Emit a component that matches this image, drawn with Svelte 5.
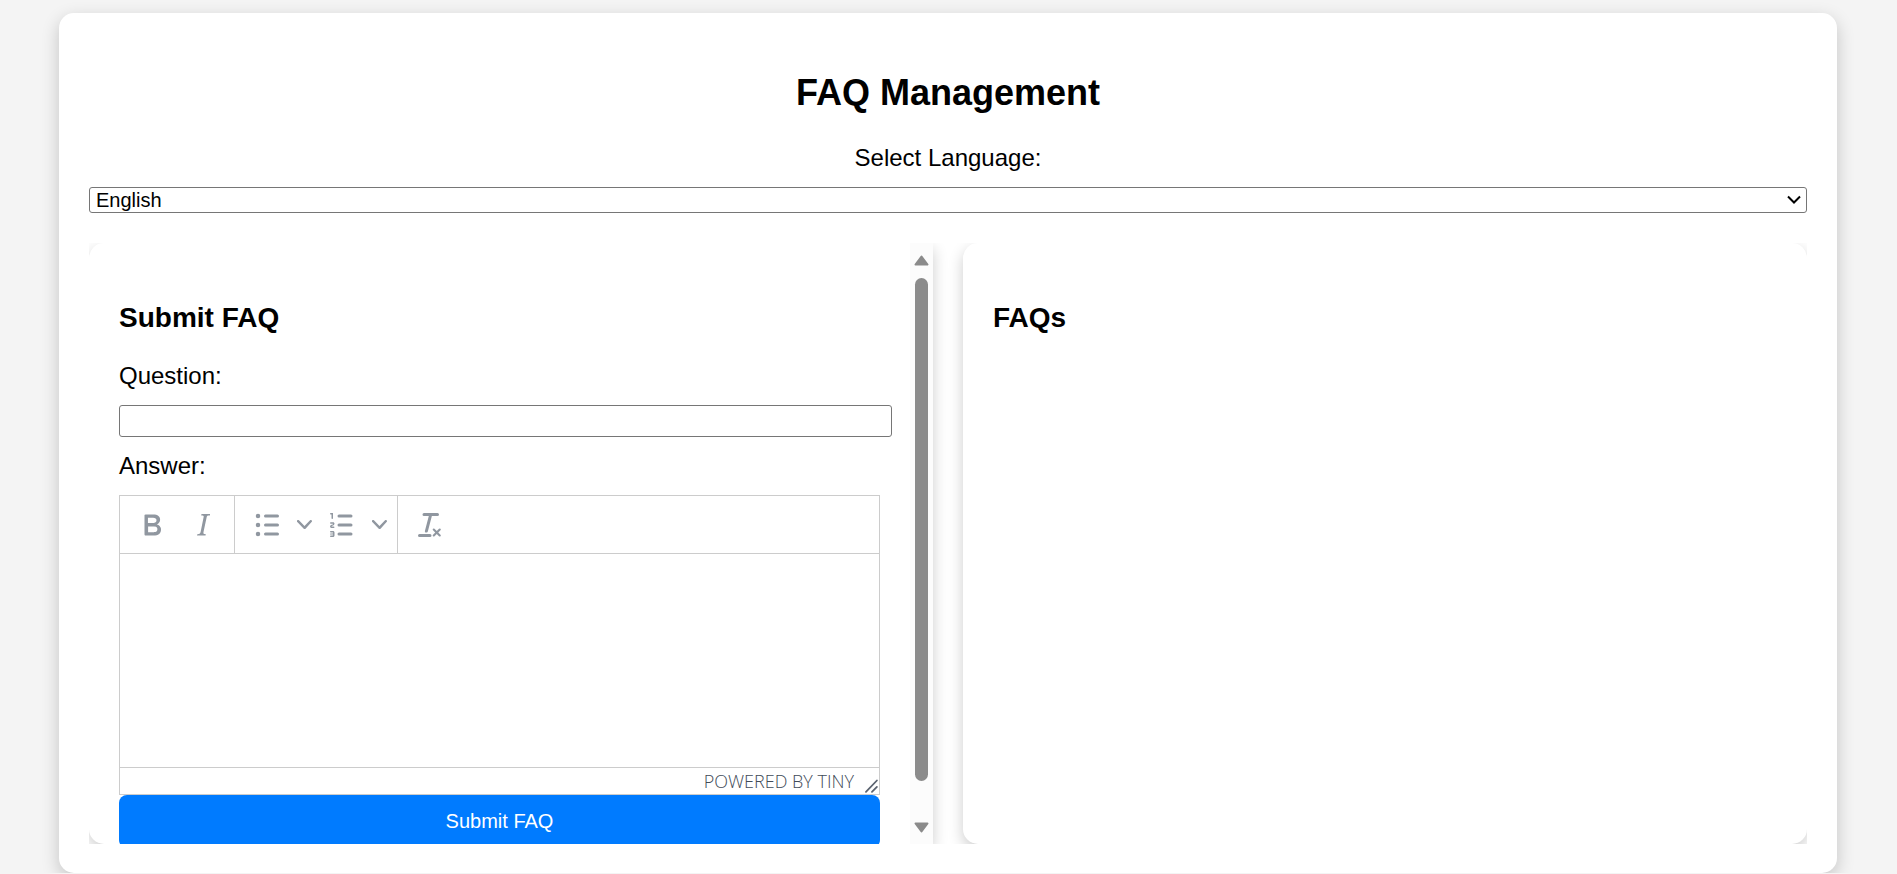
<script>
  let language = $state('en');
  let question = $state('');
  let answer = $state('');

  const languages = [
    { code: 'en', name: 'English' },
    { code: 'hi', name: 'Hindi' },
    { code: 'bn', name: 'Bengali' }
  ];

  const icons = {
    bold: 'M7.8 19c-.3 0-.5 0-.6-.2l-.2-.5V5.7c0-.2 0-.4.2-.5l.6-.2h5c1.5 0 2.7.3 3.5 1 .7.6 1.1 1.4 1.1 2.5a3 3 0 0 1-.6 1.9c-.4.6-1 1-1.6 1.2.4.1.9.3 1.3.6s.8.7 1 1.2c.4.4.5 1 .5 1.6 0 1.3-.4 2.3-1.3 3-.8.7-2.1 1-3.8 1H7.8Zm5-8.3c.6 0 1.2-.1 1.6-.5.4-.3.6-.7.6-1.3 0-1.1-.8-1.7-2.3-1.7H9.3v3.5h3.4Zm.5 6c.7 0 1.3-.1 1.7-.4.4-.4.6-.9.6-1.5s-.2-1-.7-1.4c-.4-.3-1-.4-2-.4H9.4v3.8h4Z',
    italic: 'm16.7 4.7-.1.9h-.3c-.6 0-1 0-1.4.3-.3.3-.4.6-.5 1.1l-2.1 9.8v.6c0 .5.4.8 1.4.8h.2l-.2.8H8l.2-.8h.2c1.1 0 1.8-.5 2-1.5l2-9.8.1-.5c0-.6-.4-.8-1.4-.8h-.3l.2-.9h5.8Z',
    bullets: 'M11 5h8a1 1 0 0 1 0 2h-8a1 1 0 0 1 0-2Zm0 6h8a1 1 0 0 1 0 2h-8a1 1 0 0 1 0-2Zm0 6h8a1 1 0 0 1 0 2h-8a1 1 0 0 1 0-2ZM4.5 6a1.5 1.5 0 1 1 3 0 1.5 1.5 0 0 1-3 0Zm0 6a1.5 1.5 0 1 1 3 0 1.5 1.5 0 0 1-3 0Zm0 6a1.5 1.5 0 1 1 3 0 1.5 1.5 0 0 1-3 0Z',
    numbers: 'M10 17h8a1 1 0 0 1 0 2h-8a1 1 0 0 1 0-2Zm0-6h8a1 1 0 0 1 0 2h-8a1 1 0 0 1 0-2Zm0-6h8a1 1 0 0 1 0 2h-8a1 1 0 1 1 0-2ZM6 4v3.5c0 .3-.2.5-.5.5a.5.5 0 0 1-.5-.5V5h-.5a.5.5 0 0 1 0-1H6Zm-1 8.8.2.2h1.3c.3 0 .5.2.5.5s-.2.5-.5.5H4.9a1 1 0 0 1-.9-1V13c0-.4.3-.8.6-1l1.2-.4.2-.3a.2.2 0 0 0-.2-.2H4.5a.5.5 0 0 1-.5-.5c0-.3.2-.5.5-.5h1.6c.5 0 .9.4.9 1v.1c0 .4-.3.8-.6 1l-1.2.4-.2.3ZM7 17v2c0 .6-.4 1-1 1H4.5a.5.5 0 0 1 0-1h1.2c.2 0 .3-.1.3-.3 0-.2-.1-.3-.3-.3H4.4a.4.4 0 1 1 0-.8h1.3c.2 0 .3-.1.3-.3 0-.2-.1-.3-.3-.3H4.5a.5.5 0 1 1 0-1H6c.6 0 1 .4 1 1Z',
    clear: 'M13.2 6a1 1 0 0 1 0 .2l-2.6 10a1 1 0 0 1-1 .8h-.2a.8.8 0 0 1-.8-1l2.6-10H8a1 1 0 1 1 0-2h9a1 1 0 0 1 0 2h-3.8ZM5 18h7a1 1 0 0 1 0 2H5a1 1 0 0 1 0-2Zm13 1.5L16.5 18 15 19.5a.7.7 0 0 1-1-1l1.5-1.5-1.5-1.5a.7.7 0 0 1 1-1l1.5 1.5 1.5-1.5a.7.7 0 0 1 1 1L17.5 17l1.5 1.5a.7.7 0 0 1-1 1Z',
    chevron: 'M8.7 2.2c.3-.3.8-.3 1 0 .4.4.4.9 0 1.2L5.7 7.8c-.3.3-.9.3-1.2 0L.2 3.4a.8.8 0 0 1 0-1.2c.3-.3.8-.3 1.1 0L5 6l3.7-3.8Z'
  };

  const groups = [
    [
      { name: 'Bold', icon: icons.bold },
      { name: 'Italic', icon: icons.italic }
    ],
    [
      { name: 'Bullet list', icon: icons.bullets, menu: true },
      { name: 'Numbered list', icon: icons.numbers, menu: true }
    ],
    [{ name: 'Clear formatting', icon: icons.clear }]
  ];
</script>

<main class="card">
  <h2>FAQ Management</h2>
  <label class="centered" for="language">Select Language:</label>
  <div class="select">
    <select id="language" bind:value={language}>
      {#each languages as item}
        <option value={item.code}>{item.name}</option>
      {/each}
    </select>
    <svg width="14" height="10" viewBox="0 0 14 10" aria-hidden="true">
      <path d="M1 1.5l6 6 6-6" fill="none" stroke="#000" stroke-width="2" />
    </svg>
  </div>

  <div class="columns">
    <section class="panel scrolling">
      <form class="content" onsubmit={(event) => event.preventDefault()}>
        <h3>Submit FAQ</h3>
        <label for="question">Question:</label>
        <input id="question" type="text" bind:value={question} />
        <label for="answer">Answer:</label>
        <div class="editor">
          <div class="toolbar" role="toolbar" aria-label="Formatting">
            {#each groups as group}
              <div class="group">
                {#each group as tool}
                  <button type="button" class="tool" class:split={tool.menu} aria-label={tool.name}>
                    <svg width="36" height="36" viewBox="0 0 24 24" aria-hidden="true">
                      <path d={tool.icon} fill-rule="evenodd" />
                    </svg>
                    {#if tool.menu}
                      <svg width="15" height="15" viewBox="0 0 10 10" aria-hidden="true">
                        <path d={icons.chevron} />
                      </svg>
                    {/if}
                  </button>
                {/each}
              </div>
            {/each}
          </div>
          <textarea id="answer" bind:value={answer}></textarea>
          <div class="status">
            <span>POWERED BY TINY</span>
            <svg width="15" height="15" viewBox="0 0 10 10" aria-hidden="true">
              <path d="M8.600 1L1.300 8.600M8.600 5.300L5.300 8.600" fill="none" stroke="#5b6370" stroke-width="1.200" stroke-linecap="round" />
            </svg>
          </div>
        </div>
        <button type="submit" class="submit">Submit FAQ</button>
      </form>
      <div class="scrollbar" aria-hidden="true">
        <svg width="15" height="11" viewBox="0 0 15 11">
          <path d="M7.500 1.500L13.500 9.500H1.500Z" fill="#8b8b8b" stroke="#8b8b8b" stroke-width="2" stroke-linejoin="round" />
        </svg>
        <div class="thumb"></div>
        <svg width="15" height="11" viewBox="0 0 15 11">
          <path d="M7.500 9.500L13.500 1.500H1.500Z" fill="#8b8b8b" stroke="#8b8b8b" stroke-width="2" stroke-linejoin="round" />
        </svg>
      </div>
    </section>
    <section class="panel">
      <div class="content">
        <h3>FAQs</h3>
      </div>
    </section>
  </div>
</main>

<style>
  :global(body) {
    margin: 0;
    background: #f4f4f4;
    color: #000;
    font-family: Arial, 'Liberation Sans', sans-serif;
    font-size: 24px;
    line-height: 28px;
  }

  :global(#app) {
    display: flow-root;
  }

  * {
    box-sizing: border-box;
  }

  .card {
    margin: 13px 60px 0 59px;
    padding: 30px 30px 29px;
    background: #fff;
    border-radius: 15px;
    box-shadow: 0 6px 18px rgba(0, 0, 0, 0.2);
  }

  h2 {
    margin: 30px 0 31px;
    font-size: 36px;
    line-height: 40px;
    text-align: center;
  }

  h3 {
    margin: 28px 0 27px;
    font-size: 28px;
    line-height: 34px;
  }

  label {
    display: block;
    margin-bottom: 15px;
  }

  .centered {
    text-align: center;
  }

  .select {
    display: grid;
    align-items: center;
    margin-bottom: 30px;
  }

  .select > * {
    grid-area: 1 / 1;
  }

  .select svg {
    justify-self: end;
    margin-right: 6px;
    pointer-events: none;
  }

  select {
    appearance: none;
    width: 100%;
    height: 26px;
    padding: 0 6px;
    border: 1px solid #767676;
    border-radius: 3px;
    background: #fff;
    color: #000;
    font: 20px/23px Arial, 'Liberation Sans', sans-serif;
  }

  .columns {
    display: grid;
    grid-template-columns: 1fr 1fr;
    gap: 30px;
    overflow: hidden;
  }

  .panel {
    display: flex;
    height: 601px;
    overflow: hidden;
    background: #fff;
    border-radius: 15px;
    box-shadow: 0 6px 15px rgba(0, 0, 0, 0.2);
  }

  .scrolling {
    border-radius: 15px 0 0 15px;
  }

  .content {
    flex: 1;
    min-width: 0;
    padding: 30px;
  }

  input {
    display: block;
    width: calc(100% + 12px);
    height: 32px;
    margin-bottom: 15px;
    padding: 0 6px;
    border: 1px solid #767676;
    border-radius: 3px;
    font: 20px/23px Arial, 'Liberation Sans', sans-serif;
  }

  .editor {
    display: flex;
    flex-direction: column;
    height: 300px;
    border: 1px solid #ccc;
  }

  .toolbar {
    display: flex;
    height: 58px;
    border-bottom: 1px solid #ccc;
  }

  .group {
    display: flex;
    align-items: center;
    padding: 0 6px;
    border-right: 1px solid #ccc;
  }

  .group:last-child {
    border-right: 0;
  }

  .tool {
    display: flex;
    align-items: center;
    justify-content: center;
    width: 51px;
    height: 51px;
    padding: 0;
    border: 0;
    background: none;
    fill: #9097a0;
  }

  .split {
    justify-content: flex-start;
    gap: 12px;
    width: 75px;
    padding-left: 8px;
  }

  textarea {
    flex: 1;
    width: 100%;
    padding: 15px;
    border: 0;
    resize: none;
    font: 24px/28px Arial, 'Liberation Sans', sans-serif;
  }

  .status {
    display: flex;
    align-items: center;
    justify-content: flex-end;
    gap: 10px;
    height: 27px;
    border-top: 1px solid #ccc;
    color: #414b58;
    font: 300 18px/26px 'Open Sans', sans-serif;
  }

  .status svg {
    align-self: flex-end;
  }

  .submit {
    display: block;
    width: 100%;
    padding: 15px;
    border: 0;
    border-radius: 8px;
    background: #007bff;
    color: #fff;
    font: 20px/23px Arial, 'Liberation Sans', sans-serif;
  }

  .scrollbar {
    display: flex;
    flex-direction: column;
    align-items: center;
    width: 23px;
    padding: 12px 0 11px;
    background: #fcfcfc;
  }

  .thumb {
    flex: 1;
    width: 13px;
    margin: 12px 0 41px;
    border-radius: 7px;
    background: #8b8b8b;
  }
</style>
